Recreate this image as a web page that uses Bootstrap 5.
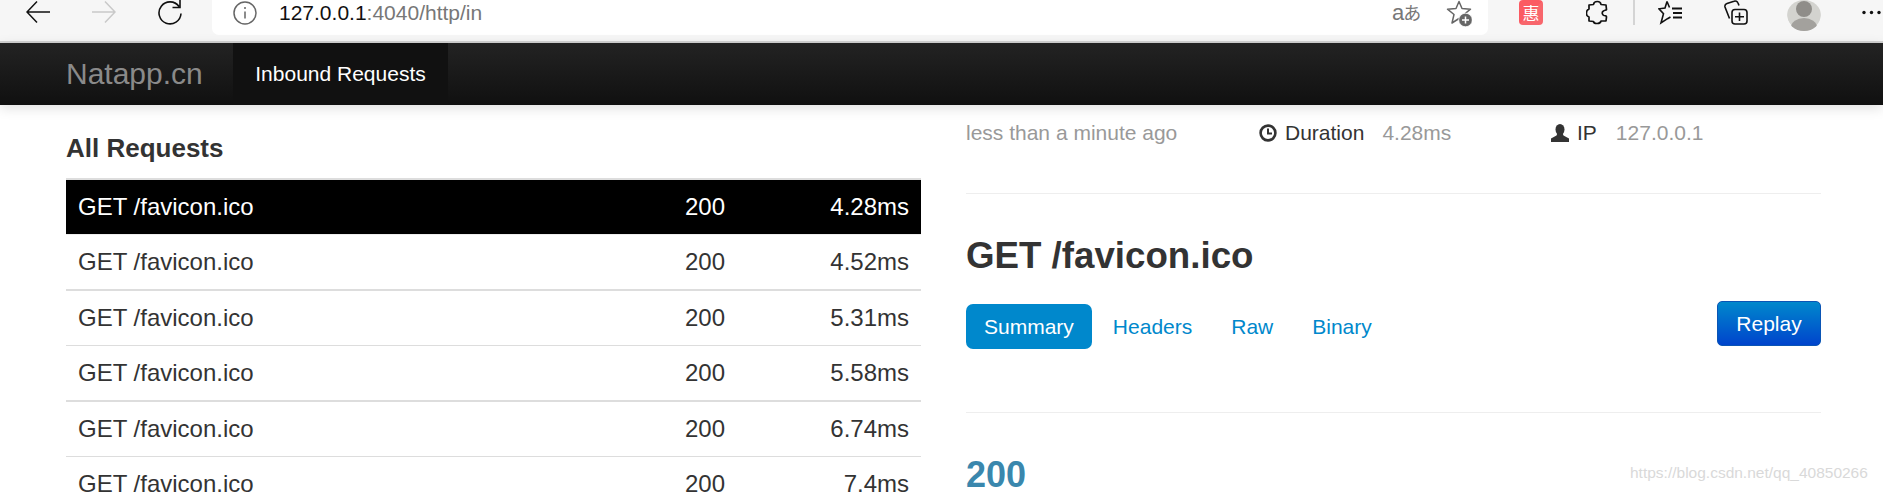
<!DOCTYPE html>
<html lang="en">
<head>
    <meta charset="UTF-8">
    <meta name="viewport" content="width=device-width, initial-scale=1.0">
    <link href="https://cdn.jsdelivr.net/npm/bootstrap@5.3.0/dist/css/bootstrap.min.css" rel="stylesheet">
    <title>Natapp.cn</title>
    <style>
        html, body { height: 492px; overflow: hidden; }
        body { font-family: "Liberation Sans", Arial, sans-serif; color: #333; background: #fff; }
        .shot { height: 492px; overflow: hidden; position: relative; }

        /* browser toolbar */
        .browser-bar { height: 43px; background: #f6f6f6; border-bottom: 2px solid #d2d2d2; }
        .tool { flex: none; display: block; }
        .back-btn { margin-left: 26px; }
        .fwd-btn { margin-left: 42px; }
        .reload-btn { margin-left: 42px; }
        .url-box { flex: none; width: 1276px; height: 35px; margin-left: 30px; background: #fff; border-radius: 0 0 7px 7px; padding-left: 21px; padding-right: 16px; }
        .url-text { margin-left: 22px; font-size: 21px; line-height: 26px; color: #777; }
        .url-text b { font-weight: 400; color: #111; }
        .read-btn { margin-left: auto; width: 28px; font-size: 22px; color: #777; line-height: 25px; white-space: nowrap; }
        .read-btn span { font-family: "Noto Sans CJK JP", sans-serif; font-size: 18px; margin-left: -1px; }
        .fav-add { margin-left: 26px; }
        .coupon { flex: none; width: 24px; height: 25px; margin-left: 31px; background: linear-gradient(135deg, #fb5a62 50%, #f8666c 50%); border-radius: 4px; color: #fff; font-family: "Noto Sans CJK SC", sans-serif; font-size: 17px; line-height: 25px; text-align: center; }
        .ext-btn { margin-left: 43px; }
        .bar-sep { flex: none; width: 2px; height: 25px; margin-left: 25px; background: #d4d4d4; }
        .favs-btn { margin-left: 23px; }
        .coll-btn { margin-left: 40px; }
        .avatar { margin-left: 39px; border-radius: 50%; }
        .more-btn { margin-left: 41px; }

        /* app navbar */
        .app-nav { height: 62px; padding: 0; background: linear-gradient(#232323, #101010); box-shadow: 0 3px 12px rgba(0, 0, 0, .13); position: relative; z-index: 2; }
        .app-brand { margin-left: 66px; width: 167px; font-size: 30px; color: #8a8a8a; line-height: 62px; }
        .app-link { width: 215px; height: 62px; line-height: 62px; background: #111; color: #fff; font-size: 21px; text-align: center; text-decoration: none; }

        /* left column */
        .left-col { flex: none; width: 855px; margin-left: 66px; }
        .left-title { font-size: 26px; font-weight: 700; line-height: 30px; margin: 28px 0 0; color: #333; }
        .req-list { margin-top: 15px; border-top: 2px solid #ddd; font-size: 24px; line-height: 28px; }
        .req-row { height: 55.6px; padding: 0 12px; border-bottom: 1px solid #ddd; color: #333; }
        .req-row:nth-child(even) { border-bottom-width: 2px; }
        .req-row:first-child { background: #000; color: #fff; border-bottom: 1px solid #eee; height: 55px; }
        .req-path { width: 607px; }
        .req-code { width: 60px; }
        .req-time { flex: 1; text-align: right; }

        /* right column */
        .right-col { flex: none; width: 855px; margin-left: 45px; }
        .meta-line { height: 56px; padding-top: 13px; font-size: 21px; line-height: 30px; color: #999; }
        .meta-when { width: 293px; }
        .meta-dur { width: 292px; }
        .meta-label { color: #333; margin: 0 18px 0 8px; }
        .meta-ip .meta-label { margin-left: 8px; margin-right: 19px; }
        .soft-rule { margin: 0; border: 0; border-top: 1px solid #eee; opacity: 1; }
        .rule-one { margin-top: 32px; }
        .req-heading { font-size: 36.7px; font-weight: 700; line-height: 44px; margin: 40px 0 0; color: #333; }
        .tab-row { margin-top: 26px; }
        .tab-pills .nav-link { font-size: 21px; line-height: 25px; padding: 10px 18px; color: #0088cc; border-radius: 7px; }
        .tab-pills .nav-link.active { background: #0088cc; color: #fff; }
        .tab-pills .nav-link:not(.active) { padding: 10px 18px 10px 21px; }
        .replay-btn { width: 104px; height: 45px; margin-top: -3px; padding: 0; font-size: 21px; color: #fff; background: linear-gradient(#0088cc, #0044cc); border: 1px solid #0a55b5; border-radius: 5px; }
        .rule-two { margin-top: 63px; }
        .status-code { font-size: 36px; font-weight: 700; line-height: 40px; margin: 42px 0 0; color: #3a87ad; }

        .watermark { position: absolute; left: 1630px; top: 464px; font-size: 15.5px; line-height: 18px; color: #d9d9d9; white-space: nowrap; }
    </style>
</head>
<body>
<div class="shot">
    <div class="browser-bar d-flex align-items-start">
        <svg class="tool back-btn" width="24" height="24" viewBox="0 0 24 24" fill="none" stroke="#111" stroke-width="1.5"><path d="M1 12H24M11 1.500 1 12l10 10.500"/></svg>
        <svg class="tool fwd-btn" width="24" height="24" viewBox="0 0 24 24" fill="none" stroke="#c9c9c9" stroke-width="1.500"><path d="M0 12H23M13 1.500 23 12 13 22.500"/></svg>
        <svg class="tool reload-btn" width="24" height="25" viewBox="0 0 24 25" fill="none" stroke="#111" stroke-width="1.600"><path d="M21 6.500A11 11 0 1 0 23 13.500M22 0v7.500h-7.500"/></svg>
        <div class="url-box d-flex align-items-start">
            <svg class="tool" width="24" height="25" viewBox="0 0 24 25" fill="none" stroke="#666" stroke-width="1.500"><circle cx="12" cy="13" r="11"/><path d="M12 11.500v7M12 7v2"/></svg>
            <div class="url-text"><b>127.0.0.1</b>:4040/http/in</div>
            <div class="read-btn">a<span>あ</span></div>
            <svg class="tool fav-add" width="26" height="27" viewBox="0 0 26 27"><path d="M13 1.500 16 8.500 24.500 9.200 18 14.500 20 23 13 18.500 6 23 8 14.500 1.500 9.200 10 8.500Z" fill="none" stroke="#666" stroke-width="1.500" stroke-linejoin="round"/><circle cx="19.500" cy="20" r="6.800" fill="#666" stroke="#fff" stroke-width=".8"/><path d="M19.500 16.500v7M16 20h7" stroke="#fff" stroke-width="1.500"/></svg>
        </div>
        <div class="coupon">惠</div>
        <svg class="tool ext-btn" width="22" height="25" viewBox="0 0 22 25" fill="none" stroke="#111" stroke-width="1.700"><path d="M7.500 4.500C8 .5 14.500.5 15 4.500L20 5 20.500 9.500C20 10.500 18.500 10 17.500 11 15.500 12 16 15 18 15.500 19 15.500 20.500 15.500 20.500 17L20 21 15 21C14.500 24 8 24.500 7.500 21.500L3 21 3 17C-.5 16-.5 10.500 3 9L3 5Z" stroke-linejoin="round"/></svg>
        <div class="bar-sep"></div>
        <svg class="tool favs-btn" width="26" height="25" viewBox="0 0 26 25" fill="none" stroke="#111" stroke-width="1.600"><path d="M9 1.500 7 8l-6 .8 4.500 5L3 23l6.500-4.300 3-1.700M9 1.500 11.500 7.500"/><path d="M14 8.500h10M15 13h9M15 17.500h9" stroke-width="1.800"/></svg>
        <svg class="tool coll-btn" width="24" height="25" viewBox="0 0 24 25" fill="none" stroke="#111" stroke-width="1.600"><path d="M5.500 18.500 1 7A3 3 0 0 1 3 3.500L10 1.200A3 3 0 0 1 14 3L15 5.500"/><rect x="8" y="9.500" width="15" height="14.500" rx="3"/><path d="M15.500 12.500v8.500M11 16.700h9"/></svg>
        <svg class="tool avatar" width="34" height="31" viewBox="0 0 34 31"><circle cx="17" cy="14" r="17" fill="#d3d3cf"/><circle cx="17" cy="9" r="8" fill="#8f8d89"/><ellipse cx="17" cy="27" rx="13" ry="9" fill="#a3a19d"/></svg>
        <svg class="tool more-btn" width="19" height="24" viewBox="0 0 19 24" fill="#111"><circle cx="2" cy="12.500" r="1.700"/><circle cx="9.500" cy="12.500" r="1.700"/><circle cx="17" cy="12.500" r="1.700"/></svg>
    </div>

    <nav class="navbar app-nav justify-content-start flex-nowrap">
        <span class="app-brand">Natapp.cn</span>
        <a class="app-link" href="#">Inbound Requests</a>
    </nav>

    <div class="d-flex">
        <div class="left-col">
            <h4 class="left-title">All Requests</h4>
            <div class="req-list">
                <div class="req-row d-flex align-items-center"><span class="req-path">GET /favicon.ico</span><span class="req-code">200</span><span class="req-time">4.28ms</span></div>
                <div class="req-row d-flex align-items-center"><span class="req-path">GET /favicon.ico</span><span class="req-code">200</span><span class="req-time">4.52ms</span></div>
                <div class="req-row d-flex align-items-center"><span class="req-path">GET /favicon.ico</span><span class="req-code">200</span><span class="req-time">5.31ms</span></div>
                <div class="req-row d-flex align-items-center"><span class="req-path">GET /favicon.ico</span><span class="req-code">200</span><span class="req-time">5.58ms</span></div>
                <div class="req-row d-flex align-items-center"><span class="req-path">GET /favicon.ico</span><span class="req-code">200</span><span class="req-time">6.74ms</span></div>
                <div class="req-row d-flex align-items-center"><span class="req-path">GET /favicon.ico</span><span class="req-code">200</span><span class="req-time">7.4ms</span></div>
            </div>
        </div>

        <div class="right-col">
            <div class="meta-line d-flex align-items-start">
                <div class="meta-when">less than a minute ago</div>
                <div class="meta-dur d-flex align-items-center">
                    <svg class="tool" width="18" height="18" viewBox="0 0 18 18" fill="none" stroke="#333"><circle cx="9" cy="9" r="7.400" stroke-width="2.600"/><path d="M9 4.500v5h4" stroke-width="2"/></svg>
                    <span class="meta-label">Duration</span><span>4.28ms</span>
                </div>
                <div class="meta-ip d-flex align-items-center">
                    <svg class="tool" width="18" height="18" viewBox="0 0 18 18" fill="#333"><ellipse cx="9" cy="5.500" rx="4.500" ry="5.500"/><path d="M6.500 9h5l1 2.500 5.500 3V18H0v-3.500l5.500-3z"/></svg>
                    <span class="meta-label">IP</span><span>127.0.0.1</span>
                </div>
            </div>
            <hr class="soft-rule rule-one">
            <h3 class="req-heading">GET /favicon.ico</h3>
            <div class="tab-row d-flex justify-content-between align-items-start">
                <ul class="nav nav-pills tab-pills">
                    <li class="nav-item"><a class="nav-link active" href="#">Summary</a></li>
                    <li class="nav-item"><a class="nav-link" href="#">Headers</a></li>
                    <li class="nav-item"><a class="nav-link" href="#">Raw</a></li>
                    <li class="nav-item"><a class="nav-link" href="#">Binary</a></li>
                </ul>
                <button type="button" class="btn replay-btn">Replay</button>
            </div>
            <hr class="soft-rule rule-two">
            <h2 class="status-code">200</h2>
        </div>
    </div>

    <div class="watermark">https://blog.csdn.net/qq_40850266</div>
</div>
<script src="https://cdn.jsdelivr.net/npm/bootstrap@5.3.0/dist/js/bootstrap.bundle.min.js"></script>
</body>
</html>
